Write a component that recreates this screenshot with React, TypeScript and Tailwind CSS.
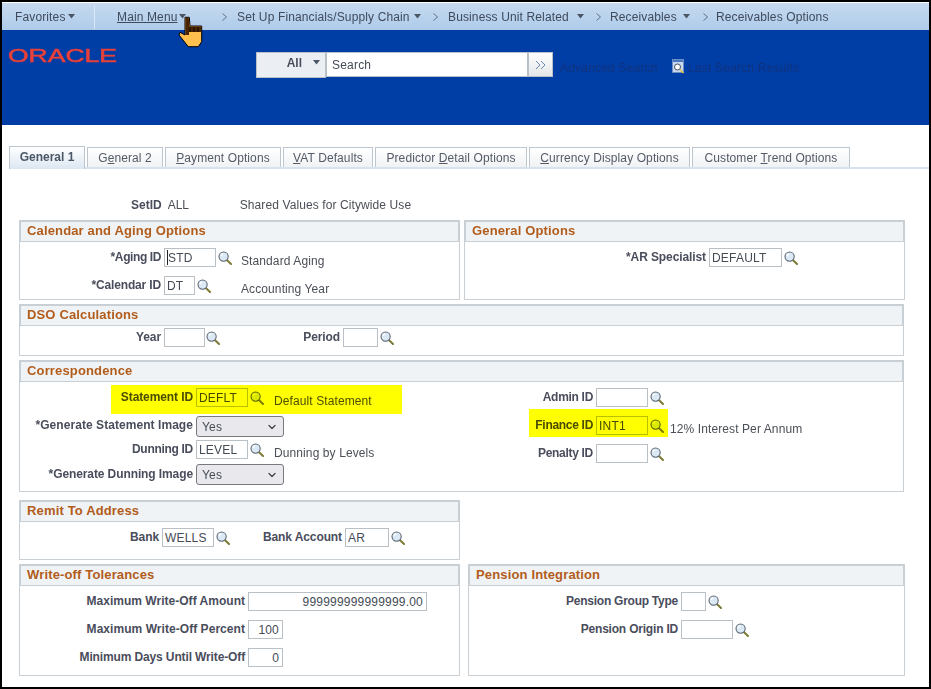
import { ChevronDown } from "lucide-react";

function Caret({ className = "" }: { className?: string }) {
  return (
    <svg width="7" height="5" viewBox="0 0 7 5" className={`shrink-0 ${className}`}>
      <path d="M0 0h7L3.5 4.5z" fill="#4a5666" />
    </svg>
  );
}

function Arrow({ className = "" }: { className?: string }) {
  return (
    <svg width="5" height="8" viewBox="0 0 5 8" className={`shrink-0 ${className}`}>
      <path d="M0.5 0.5L4.5 4L0.5 7.5" fill="none" stroke="#55677d" strokeWidth="0.9" />
    </svg>
  );
}

function Lookup({ className = "" }: { className?: string }) {
  return (
    <svg width="14" height="14" viewBox="0 0 14 14" className={`mt-[3px] shrink-0 ${className}`}>
      <path d="M8.6 8.8L13 13" stroke="#7d7a35" strokeWidth="2" strokeLinecap="round" />
      <circle cx="5.6" cy="5.6" r="4.6" fill="#dbe8f5" stroke="#5c6670" strokeWidth="1.1" />
      <path d="M3 5.2a3 3 0 0 1 2.4-2.4" fill="none" stroke="#ffffff" strokeWidth="1.2" />
    </svg>
  );
}

function Hand() {
  return (
    <svg width="26" height="33" viewBox="0 0 26 33" className="absolute left-[176px] top-[13px]">
      <path
        d="M7 2.3H11.3L12 11H23.7V26.7L20.3 31.7H10.3L1 20L2 17.3L7 20Z"
        fill="#ffc04d"
        stroke="#000"
        strokeWidth="1"
      />
      <path d="M7.5 2.8H10.8L11.4 11.5H23.2V17H11V20H7.5Z" fill="#4a2500" />
      <path d="M12 12v5M16 12v5M20 12v5" stroke="#000" strokeWidth="0.8" />
    </svg>
  );
}

function Input({ value = "", className = "" }: { value?: string; className?: string }) {
  return (
    <input
      readOnly
      value={value}
      className={`h-[19px] shrink-0 border border-[#b9c0c6] bg-white pl-[2px] text-[12px] leading-[17px] tracking-[0.2px] text-[#444b55] outline-none ${className}`}
    />
  );
}

function Label({
  text,
  className = "",
  track = "tracking-[-0.1px]",
}: {
  text: string;
  className?: string;
  track?: string;
}) {
  return (
    <span className={`shrink-0 whitespace-nowrap text-right text-[12px] font-bold leading-[19px] text-[#4a4d5c] ${track} ${className}`}>
      {text}
    </span>
  );
}

function Desc({ text, className = "" }: { text: string; className?: string }) {
  return (
    <span className={`-mb-[2px] mt-[6px] whitespace-nowrap text-[12px] leading-[15px] tracking-[0.1px] text-[#4b4f57] ${className}`}>
      {text}
    </span>
  );
}

function Select({ value }: { value: string }) {
  return (
    <div className="ml-[3px] flex h-[21px] w-[88px] items-center justify-between rounded-[3px] border border-[#77797e] bg-[#e9e9ed] pl-[5px] pr-[5px] text-[12px] tracking-[0.2px] text-[#444b55]">
      <span>{value}</span>
      <ChevronDown size={12} strokeWidth={2.5} color="#444" />
    </div>
  );
}

function Panel({
  title,
  className = "",
  children,
}: {
  title: string;
  className?: string;
  children: React.ReactNode;
}) {
  return (
    <div className={`relative border border-[#c8cfd5] bg-white ${className}`}>
      <div className="h-[21px] border border-[#c8cfd5] bg-[#f0f3f5] pl-[6px] text-[13px] font-bold leading-[18px] tracking-[0.15px] text-[#b25c1c]">
        {title}
      </div>
      {children}
    </div>
  );
}

function Tab({ label, className = "", active = false }: { label: React.ReactNode; className?: string; active?: boolean }) {
  return (
    <div
      className={`flex shrink-0 items-center justify-center border border-b-0 border-[#bcc6cf] text-[12px] ${
        active
          ? "h-[23px] bg-gradient-to-b from-white to-[#dce7f2] pb-[2px] font-bold tracking-normal text-[#4a5666]"
          : "mt-[1px] h-[20px] bg-gradient-to-b from-white to-[#f0f2f4] tracking-[0.1px] text-[#555b66]"
      } ${className}`}
    >
      <span>{label}</span>
    </div>
  );
}

export default function App() {
  return (
    <div className="h-[689px] w-[931px] overflow-hidden bg-black p-[2px] font-['Liberation_Sans',Arial,sans-serif]">
      <div className="relative h-full bg-white pt-[1px]">
        {/* top nav */}
        <div className="flex h-[27px] items-center whitespace-nowrap bg-gradient-to-b from-[#c6daf0] to-[#aecbea] text-[12px] tracking-[0.13px] text-[#3f4b5c]">
          <span className="ml-[13px] w-[49px]">Favorites</span>
          <Caret className="ml-[4px]" />
          <div className="ml-[19px] h-[24px] w-[1px] bg-[#dbe7f5]" />
          <span className="ml-[22px] w-[58px] underline">Main Menu</span>
          <Caret className="ml-[4px]" />
          <Arrow className="ml-[36px]" />
          <span className="ml-[10px] w-[172px]">Set Up Financials/Supply Chain</span>
          <Caret className="ml-[5px]" />
          <Arrow className="ml-[12px]" />
          <span className="ml-[10px] w-[125px]">Business Unit Related</span>
          <Caret className="ml-[4px]" />
          <Arrow className="ml-[12px]" />
          <span className="ml-[9px] w-[68px]">Receivables</span>
          <Caret className="ml-[5px]" />
          <Arrow className="ml-[13px]" />
          <span className="ml-[8px]">Receivables Options</span>
        </div>
        <Hand />

        {/* blue band */}
        <div className="flex h-[95px] items-start bg-[#003da5]">
          <svg width="112" height="18" viewBox="0 0 112 18" className="ml-[6px] mt-[17px] shrink-0">
            <text
              x="0"
              y="14.5"
              textLength="109"
              lengthAdjust="spacingAndGlyphs"
              fontFamily="Liberation Sans"
              fontSize="18"
              fill="#e8413a"
              stroke="#e8413a"
              strokeWidth="0.5"
            >
              ORACLE
            </text>
          </svg>
          <div className="ml-[136px] mt-[22px] flex h-[26px] w-[70px] shrink-0 items-start justify-end border border-[#b8c0c8] bg-[#ebeff3] pr-[5px] pt-[1px] text-[12px] font-bold text-[#4a4d5c]">
            <span>All</span>
            <Caret className="ml-[11px] mt-[6px]" />
          </div>
          <div className="mt-[22px] flex h-[25px] w-[202px] shrink-0 items-center border border-[#b8c0c8] bg-white pl-[5px] text-[12px] tracking-[0.2px] text-[#444b55]">
            Search
          </div>
          <div className="mt-[22px] flex h-[25px] w-[25px] shrink-0 items-center justify-center border border-[#b8c0c8] bg-gradient-to-b from-white to-[#e4e6e8]">
            <svg width="12" height="10" viewBox="0 0 12 10">
              <path d="M1 1L5 5L1 9M6 1L10 5L6 9" fill="none" stroke="#6d8cb5" strokeWidth="1" />
            </svg>
          </div>
          <span className="ml-[7px] mt-[29px] w-[94px] whitespace-nowrap text-[12px] tracking-[0.2px] text-[#10337f]">Advanced Search</span>
          <svg width="13" height="15" viewBox="0 0 13 15" className="ml-[18px] mt-[29px] shrink-0">
            <rect x="0.5" y="0.5" width="11" height="13" fill="#c8d8ee" stroke="#6f8fc4" />
            <rect x="1" y="1" width="10" height="2" fill="#4a78c0" />
            <circle cx="5.5" cy="8" r="3" fill="#fff" stroke="#44505e" strokeWidth="1" />
            <path d="M8 10.5L11.5 14" stroke="#e0c040" strokeWidth="1.5" />
          </svg>
          <span className="ml-[3px] mt-[29px] whitespace-nowrap text-[12px] tracking-[0.2px] text-[#10337f]">Last Search Results</span>
        </div>

        {/* tabs */}
        <div className="ml-[7px] mt-[21px] flex items-start gap-[2px]">
          <Tab active label="General 1" className="w-[76px]" />
          <Tab label={<>G<u>e</u>neral 2</>} className="w-[76px]" />
          <Tab label={<><u>P</u>ayment Options</>} className="w-[116px]" />
          <Tab label={<><u>V</u>AT Defaults</>} className="w-[90px]" />
          <Tab label={<>Predictor <u>D</u>etail Options</>} className="w-[152px]" />
          <Tab label={<><u>C</u>urrency Display Options</>} className="w-[161px]" />
          <Tab label={<>Customer <u>T</u>rend Options</>} className="w-[158px]" />
        </div>
        <div className="ml-[7px] -mt-[2px] h-[2px] bg-[#d6e2f0]" />

        {/* set id */}
        <div className="ml-[129px] mt-[29px] flex h-[14px] items-center text-[12px] text-[#4b4f57]">
          <span className="font-bold text-[#4a4d5c]">SetID</span>
          <span className="ml-[6px] w-[72px]">ALL</span>
          <span className="tracking-[0.1px]">Shared Values for Citywide Use</span>
        </div>

        <div className="ml-[17px] mt-[8px] flex flex-col items-start">
          <div className="flex gap-[4px]">
            <Panel title="Calendar and Aging Options" className="h-[80px] w-[441px]">
              <div className="flex flex-col gap-[9px] pt-[6px]">
                <div className="flex items-start">
                  <Label text="*Aging ID" track="tracking-[-0.4px]" className="w-[141px]" />
                  <div className="relative ml-[3px] flex shrink-0">
                    <Input value="STD" className="w-[52px] pl-[3px]" />
                    {/* text cursor sitting in the focused field */}
                    <span className="absolute left-[3px] top-[2px] h-[15px] w-[1px] bg-[#222]" />
                  </div>
                  <Lookup className="ml-[2px]" />
                  <Desc text="Standard Aging" className="ml-[9px]" />
                </div>
                <div className="flex items-start">
                  <Label text="*Calendar ID" track="tracking-[-0.15px]" className="w-[141px]" />
                  <Input value="DT" className="ml-[3px] w-[31px]" />
                  <Lookup className="ml-[2px]" />
                  <Desc text="Accounting Year" className="ml-[30px]" />
                </div>
              </div>
            </Panel>
            <Panel title="General Options" className="h-[80px] w-[441px]">
              <div className="flex items-start pt-[6px]">
                <Label text="*AR Specialist" className="w-[241px]" />
                <Input value="DEFAULT" className="ml-[3px] w-[73px]" />
                <Lookup className="ml-[2px]" />
              </div>
            </Panel>
          </div>

          <Panel title="DSO Calculations" className="mt-[4px] h-[52px] w-[885px]">
            <div className="flex items-start pt-[2px]">
              <Label text="Year" className="w-[141px]" />
              <Input className="ml-[3px] w-[41px]" />
              <Lookup className="ml-[1px]" />
              <Label text="Period" className="w-[120px]" />
              <Input className="ml-[3px] w-[35px]" />
              <Lookup className="ml-[2px]" />
            </div>
          </Panel>

          <Panel title="Correspondence" className="mt-[4px] h-[132px] w-[885px]">
            <div className="flex items-start">
              <div className="flex w-[420px] shrink-0 flex-col pt-[6px]">
                <div className="flex items-start">
                  <Label text="Statement ID" className="w-[173px]" />
                  <Input value="DEFLT" className="ml-[3px] w-[52px]" />
                  <Lookup className="ml-[2px]" />
                  <Desc text="Default Statement" className="ml-[10px]" />
                </div>
                <div className="mt-[9px] flex items-start">
                  <Label text="*Generate Statement Image" track="tracking-[0.06px]" className="w-[173px]" />
                  <Select value="Yes" />
                </div>
                <div className="mt-[3px] flex items-start">
                  <Label text="Dunning ID" track="tracking-[-0.3px]" className="w-[173px]" />
                  <Input value="LEVEL" className="ml-[3px] w-[52px]" />
                  <Lookup className="ml-[2px]" />
                  <Desc text="Dunning by Levels" className="ml-[10px]" />
                </div>
                <div className="mt-[5px] flex items-start">
                  <Label text="*Generate Dunning Image" track="tracking-[-0.1px]" className="mt-[1px] w-[173px]" />
                  <Select value="Yes" />
                </div>
              </div>
              <div className="flex flex-col gap-[9px] pt-[6px]">
                <div className="flex items-start">
                  <Label text="Admin ID" track="tracking-[-0.3px]" className="w-[153px]" />
                  <Input className="ml-[3px] w-[52px]" />
                  <Lookup className="ml-[2px]" />
                </div>
                <div className="flex items-start">
                  <Label text="Finance ID" track="tracking-[-0.3px]" className="w-[153px]" />
                  <Input value="INT1" className="ml-[3px] w-[52px]" />
                  <Lookup className="ml-[2px]" />
                  <Desc text="12% Interest Per Annum" className="ml-[6px]" />
                </div>
                <div className="flex items-start">
                  <Label text="Penalty ID" track="tracking-[-0.3px]" className="w-[153px]" />
                  <Input className="ml-[3px] w-[52px]" />
                  <Lookup className="ml-[2px]" />
                </div>
              </div>
            </div>
            {/* highlighter marks drawn over the fields */}
            <div className="absolute left-[91px] top-[24px] h-[29px] w-[291px] bg-[#ffff00] mix-blend-multiply" />
            <div className="absolute left-[509px] top-[48px] h-[28px] w-[139px] bg-[#ffff00] mix-blend-multiply" />
          </Panel>

          <Panel title="Remit To Address" className="mt-[8px] h-[60px] w-[441px]">
            <div className="flex items-start pt-[6px]">
              <Label text="Bank" className="w-[139px]" />
              <Input value="WELLS" className="ml-[3px] w-[52px]" />
              <Lookup className="ml-[2px]" />
              <Label text="Bank Account" className="w-[112px]" />
              <Input value="AR" className="ml-[3px] w-[44px]" />
              <Lookup className="ml-[2px]" />
            </div>
          </Panel>

          <div className="mt-[4px] flex gap-[8px]">
            <Panel title="Write-off Tolerances" className="h-[112px] w-[441px]">
              <div className="flex flex-col gap-[9px] pt-[6px]">
                <div className="flex items-start">
                  <Label text="Maximum Write-Off Amount" track="tracking-[0.02px]" className="w-[225px]" />
                  <Input value="999999999999999.00" className="ml-[3px] w-[179px] pr-[3px] text-right" />
                </div>
                <div className="flex items-start">
                  <Label text="Maximum Write-Off Percent" track="tracking-[0.05px]" className="w-[225px]" />
                  <Input value="100" className="ml-[3px] w-[35px] pr-[3px] text-right" />
                </div>
                <div className="flex items-start">
                  <Label text="Minimum Days Until Write-Off" track="tracking-[-0.13px]" className="w-[225px]" />
                  <Input value="0" className="ml-[3px] w-[35px] pr-[3px] text-right" />
                </div>
              </div>
            </Panel>
            <Panel title="Pension Integration" className="h-[112px] w-[437px]">
              <div className="flex flex-col gap-[9px] pt-[6px]">
                <div className="flex items-start">
                  <Label text="Pension Group Type" track="tracking-[-0.25px]" className="w-[209px]" />
                  <Input className="ml-[3px] w-[25px]" />
                  <Lookup className="ml-[2px]" />
                </div>
                <div className="flex items-start">
                  <Label text="Pension Origin ID" track="tracking-[-0.2px]" className="w-[209px]" />
                  <Input className="ml-[3px] w-[52px]" />
                  <Lookup className="ml-[2px]" />
                </div>
              </div>
            </Panel>
          </div>
        </div>
      </div>
    </div>
  );
}
